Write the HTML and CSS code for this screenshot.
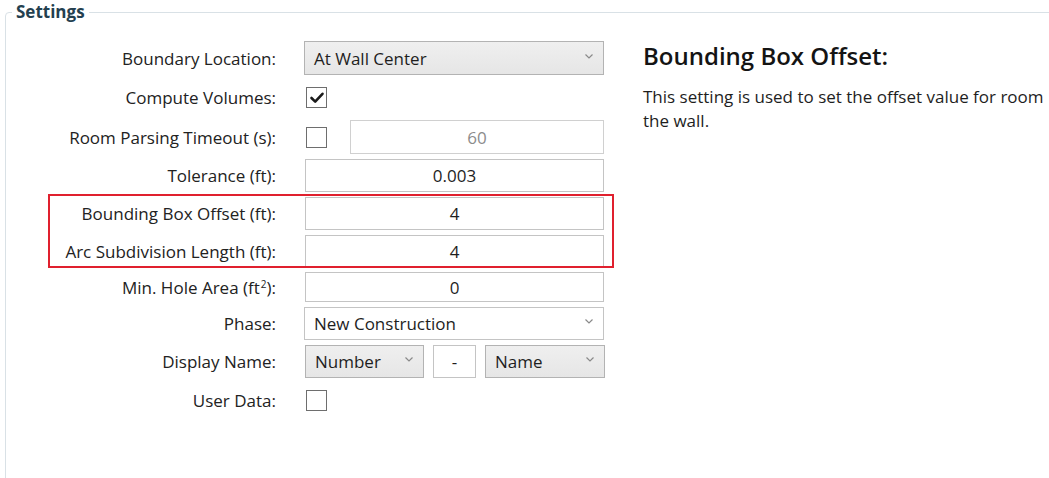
FILE: index.html
```html
<!DOCTYPE html>
<html lang="en">
<head>
<meta charset="utf-8">
<title>Settings</title>
<link rel="stylesheet" href="styles.css">
</head>
<body>
<fieldset class="group">
  <legend class="group-title">Settings</legend>
  <div class="layout">
    <div class="form">
      <div class="lbl r1">Boundary Location:</div>
      <div class="ctl r1">
        <div class="combo"><span>At Wall Center</span><svg class="chev" width="8" height="5" viewBox="0 0 8 5"><path d="M0.5 0.5 L4 4 L7.5 0.5" fill="none" stroke="#8a8a8a" stroke-width="1.2"/></svg></div>
      </div>

      <div class="lbl r2">Compute Volumes:</div>
      <div class="ctl r2">
        <span class="check"><svg width="18" height="18" viewBox="0 0 18 18"><path d="M3.5 9 L7.2 12.6 L14.5 4.8" fill="none" stroke="#1a1a1a" stroke-width="2.6" stroke-linecap="round" stroke-linejoin="round"/></svg></span>
      </div>

      <div class="lbl r3">Room Parsing Timeout (s):</div>
      <div class="ctl r3 timeout">
        <span class="check"></span>
        <div class="textbox disabled">60</div>
      </div>

      <div class="lbl r4">Tolerance (ft):</div>
      <div class="ctl r4"><div class="textbox">0.003</div></div>

      <div class="lbl r5">Bounding Box Offset (ft):</div>
      <div class="ctl r5"><div class="textbox">4</div></div>

      <div class="lbl r6">Arc Subdivision Length (ft):</div>
      <div class="ctl r6"><div class="textbox">4</div></div>

      <div class="lbl r7">Min. Hole Area (ft<sup>2</sup>):</div>
      <div class="ctl r7"><div class="textbox">0</div></div>

      <div class="lbl r8">Phase:</div>
      <div class="ctl r8">
        <div class="combo white"><span>New Construction</span><svg class="chev" width="8" height="5" viewBox="0 0 8 5"><path d="M0.5 0.5 L4 4 L7.5 0.5" fill="none" stroke="#8a8a8a" stroke-width="1.2"/></svg></div>
      </div>

      <div class="lbl r9">Display Name:</div>
      <div class="ctl r9 display">
        <div class="combo small"><span>Number</span><svg class="chev" width="8" height="5" viewBox="0 0 8 5"><path d="M0.5 0.5 L4 4 L7.5 0.5" fill="none" stroke="#8a8a8a" stroke-width="1.2"/></svg></div>
        <div class="textbox dash">-</div>
        <div class="combo small"><span>Name</span><svg class="chev" width="8" height="5" viewBox="0 0 8 5"><path d="M0.5 0.5 L4 4 L7.5 0.5" fill="none" stroke="#8a8a8a" stroke-width="1.2"/></svg></div>
      </div>

      <div class="lbl r10">User Data:</div>
      <div class="ctl r10"><span class="check"></span></div>

      <div class="highlight"></div>
    </div>

    <div class="info">
      <h2 class="info-title">Bounding Box Offset:</h2>
      <p class="info-text">This setting is used to set the offset value for room<br>the wall.</p>
    </div>
  </div>
</fieldset>
</body>
</html>
```

FILE: styles.css
```css
html, body {
  margin: 0;
  padding: 0;
  background: #ffffff;
  overflow: hidden;
}

body {
  font-family: "Open Sans", "Noto Sans", "Liberation Sans", sans-serif;
  font-size: 17px;
  color: #262626;
  width: 1049px;
  height: 478px;
}

.group {
  margin: 1px 0 0 5px;
  padding: 0;
  width: 1100px;
  height: 560px;
  border: 1px solid #d9e1e6;
  border-radius: 4px;
  box-sizing: border-box;
}

.group-title {
  margin-left: 6px;
  padding: 0 4px;
  font-size: 17px;
  font-weight: 700;
  line-height: 22px;
  color: #24404f;
}

.layout {
  display: flex;
  align-items: flex-start;
}

.form {
  display: grid;
  grid-template-columns: 270px 300px;
  grid-template-rows: 34px 35px 34px 33px 33px 32px 30px 33px 33px 35px;
  column-gap: 28px;
  row-gap: 5px;
  padding-top: 18px;
}

.lbl {
  grid-column: 1;
  display: flex;
  align-items: center;
  justify-content: flex-end;
  white-space: nowrap;
  color: #222222;
}

.lbl sup {
  font-size: 10px;
  line-height: 0;
  position: relative;
  top: -3px;
  margin-left: 1px;
}

.ctl {
  grid-column: 2;
  display: flex;
  align-items: center;
}

.r1 { grid-row: 1; }
.r2 { grid-row: 2; }
.r3 { grid-row: 3; }
.r4 { grid-row: 4; }
.r5 { grid-row: 5; }
.r6 { grid-row: 6; }
.r7 { grid-row: 7; }
.r8 { grid-row: 8; }
.r9 { grid-row: 9; }
.r10 { grid-row: 10; }

.combo {
  box-sizing: border-box;
  width: 100%;
  height: 100%;
  display: flex;
  align-items: center;
  justify-content: space-between;
  padding: 0 10px 0 9px;
  border: 1px solid #b3b3b3;
  background: linear-gradient(#efefef, #e6e6e6);
  color: #1e1e1e;
}

.combo.white {
  background: #ffffff;
  border-color: #c4c4c4;
}

.chev {
  flex: none;
  margin-top: -4px;
}

.textbox {
  box-sizing: border-box;
  flex: 1;
  height: 100%;
  display: flex;
  align-items: center;
  justify-content: center;
  border: 1px solid #c4c4c4;
  background: #ffffff;
  color: #1e1e1e;
  margin-left: 1px;
}

.textbox.disabled {
  color: #8c8c8c;
  border-color: #d0d0d0;
}

.check {
  box-sizing: border-box;
  flex: none;
  width: 21px;
  height: 21px;
  margin-left: 2px;
  border: 1.5px solid #6e6e6e;
  background: #ffffff;
  display: flex;
  align-items: center;
  justify-content: center;
}

.timeout {
  gap: 23px;
}

.timeout .textbox {
  margin-left: 0;
}

.display {
  gap: 9px;
  margin-left: 1px;
}

.display .combo.small {
  flex: 0 0 119px;
}

.display .combo.small:last-child {
  flex: 0 0 120px;
}

.display .textbox.dash {
  flex: 0 0 43px;
  margin-left: 0;
}

.highlight {
  grid-row: 5 / span 2;
  grid-column: 1 / -1;
  margin: -3px -10px -1px 42px;
  border: 2px solid #e0202e;
  pointer-events: none;
}

.info {
  margin-left: 39px;
  padding-top: 17px;
  white-space: nowrap;
}

.info-title {
  margin: 0;
  font-size: 24px;
  font-weight: 600;
  line-height: 32px;
  color: #141414;
}

.info-text {
  margin: 13px 0 0 0;
  font-size: 17px;
  line-height: 24px;
  color: #1e1e1e;
}
```
